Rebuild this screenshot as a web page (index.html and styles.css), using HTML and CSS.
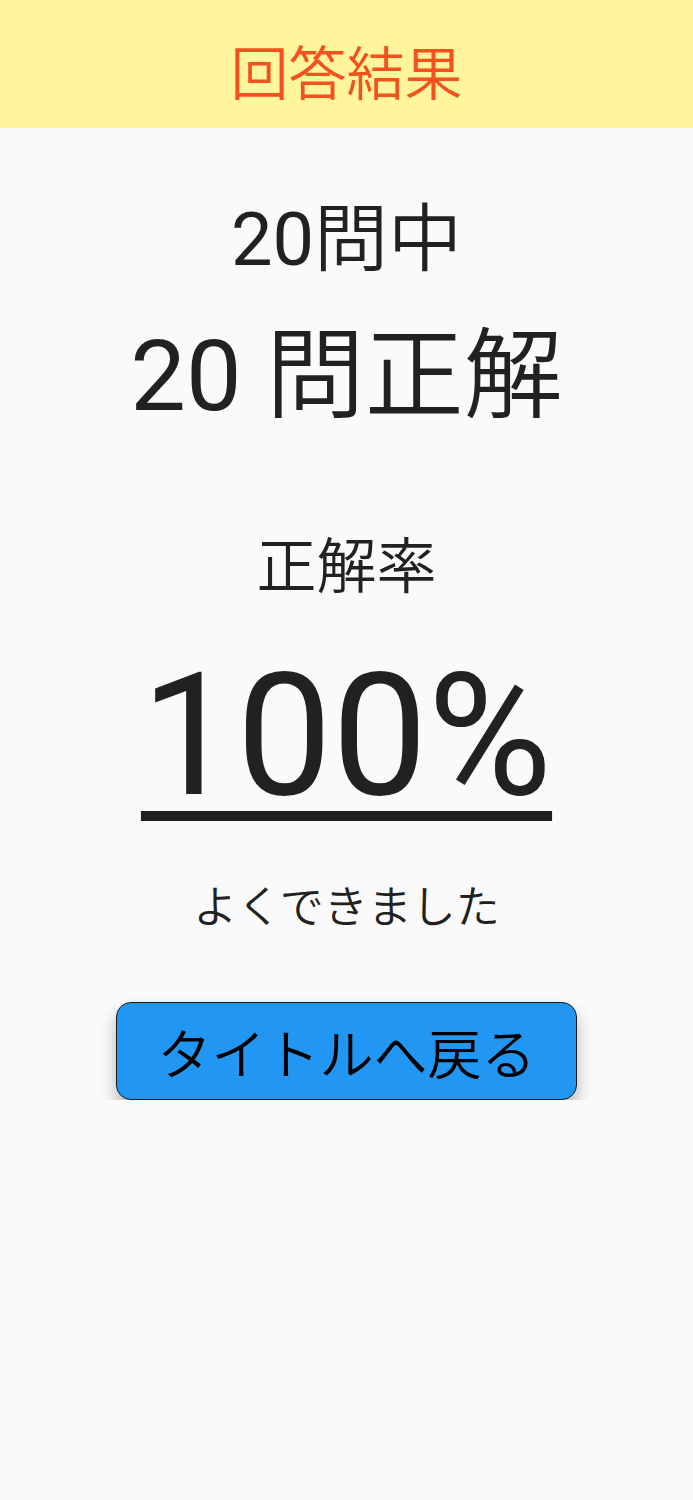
FILE: index.html
```html
<!DOCTYPE html>
<html lang="ja">
<head>
  <meta charset="UTF-8" />
  <title>回答結果</title>
  <meta name="viewport" content="width=device-width, initial-scale=1.0" />
  <link rel="stylesheet" href="styles.css">
</head>
<body>

  <header class="app-bar">
    <h1 class="app-title">回答結果</h1>
  </header>

  <main class="result">
    <p class="total"><span class="num">20</span>問中</p>
    <p class="correct"><span class="num">20</span> 問正解</p>

    <p class="rate-label">正解率</p>
    <p class="rate"><span class="rate-value">100%</span></p>

    <p class="message">よくできました</p>

    <button class="back-btn" type="button">タイトルへ戻る</button>
  </main>

</body>
</html>
```

FILE: styles.css
```css
body {
  margin: 0;
  background: #fafafa;
  color: #212121;
  font-family: Roboto, "Noto Sans CJK JP", sans-serif;
  font-weight: 350;
}

p {
  margin: 0;
  text-align: center;
}

.num {
  font-weight: normal;
}

.app-bar {
  height: 128px;
  background: #fff59d;
  display: flex;
  align-items: center;
  justify-content: center;
}

.app-title {
  margin: 0;
  font-size: 58px;
  font-weight: 350;
  line-height: 70px;
  color: #f4511e;
  padding-top: 22px;
}

.result {
  display: flex;
  flex-direction: column;
  align-items: center;
  padding-top: 68px;
}

.total {
  font-size: 74px;
  line-height: 88px;
}

.correct {
  margin-top: 34px;
  font-size: 99px;
  line-height: 117px;
}

.rate-label {
  margin-top: 97px;
  font-size: 60px;
  line-height: 72px;
}

.rate {
  margin-top: 47px;
  font-size: 170px;
  line-height: 170px;
  font-weight: normal;
}

.rate-value {
  text-decoration: underline;
  text-decoration-thickness: 10px;
  text-underline-offset: 17px;
}

.message {
  margin-top: 61px;
  font-size: 44px;
  line-height: 53px;
}

.back-btn {
  margin-top: 67px;
  width: 461px;
  height: 98px;
  background: #2196f3;
  color: #000;
  border: 1.5px solid #1a1a1a;
  border-radius: 15px;
  font-family: Roboto, "Noto Sans CJK JP", sans-serif;
  font-size: 54px;
  font-weight: 350;
  padding: 0;
  box-shadow: 0 10px 16px rgba(0, 0, 0, 0.28);
  cursor: pointer;
}
```
